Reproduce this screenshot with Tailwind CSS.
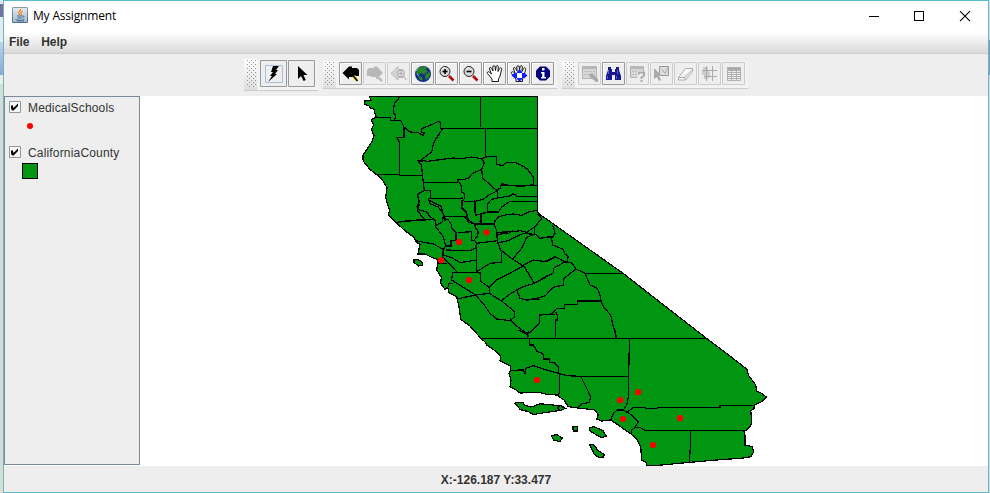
<!DOCTYPE html>
<html lang="en">
<head>
<meta charset="utf-8">
<title>My Assignment</title>
<script src="https://cdn.jsdelivr.net/npm/@tailwindcss/browser@4"></script>
</head>
<body class="w-[990px] h-[493px] overflow-hidden flex font-['Liberation_Sans',sans-serif] text-[12px] text-[#333]">
<!-- strip of the desktop behind the window -->
<div class="w-[3px] flex flex-col shrink-0 bg-[#ddd9d3]">
  <div class="h-[4px] bg-[#e3e3ea]"></div><div class="h-[13px] bg-[#7d6c9e]"></div><div class="h-[25px] bg-[#e9e9f0]"></div><div class="h-[33px] bg-linear-to-b from-[#c6d0e8] to-[#8fa6d3]"></div><div class="h-[9px] bg-[#f0ece0]"></div>
</div>
<div class="w-[986px] h-[493px] shrink-0 flex flex-col border border-[#5abccb] bg-[#eee]">
  <header class="h-[31px] shrink-0 bg-white flex items-center pl-2 text-black">
    <svg class="w-4 h-4 shrink-0 mb-[3px]" viewBox="0 0 16 16"><defs><linearGradient id="jb" x2="0" y2="1"><stop stop-color="#8799aa"/><stop offset="1" stop-color="#47688a"/></linearGradient><linearGradient id="jf" x2="0" y2="1"><stop stop-color="#e4e8eb"/><stop offset="1" stop-color="#a9bdcf"/></linearGradient></defs><rect width="16" height="16" rx="1.5" fill="url(#jb)"/><rect x="1" y="1" width="14" height="14" fill="url(#jf)"/><path d="M8.600 2c.8 2-2.600 2.500-2 4.200.2.700.9 1 1.200 1.800M10.600 4.200c-2.600 1.200-2 2-1.300 2.800.3.500 0 .9-.4 1.200" fill="none" stroke="#ec851c" stroke-width="1.200"/><path d="M5 9h5.500M5.500 11h4.500M10.500 9.200c2-.7 2.200 1 .3 1.700M3.600 12.500c1 1.200 7 1.200 8.700 0M5 13.800h7" fill="none" stroke="#426b96"/></svg>
    <span class="ml-[5px] mb-[2px] font-['Open_Sans'] text-[12px] leading-4 tracking-[-0.18px] w-[110px] whitespace-nowrap">My Assignment</span>
    <svg class="ml-auto mr-[16px] mb-[2px] w-[106px] h-[12px]" viewBox="0 0 106 12" fill="none" stroke="#000"><path d="M3 6.500h10M48.500 1.500h9v9h-9z" shape-rendering="crispEdges"/><path d="M94 1.200l10 10M104 1.200l-10 10" stroke-width="1.100"/></svg>
  </header>
  <nav class="h-[22px] shrink-0 border-b border-[#ccc] bg-linear-to-b from-white to-[#dadada] flex pl-[5px] gap-[12px] font-bold leading-[20px] tracking-[-0.1px]"><span>File</span><span>Help</span></nav>
  <div class="h-[42px] shrink-0 flex pl-[240px] pt-[4px]">
    <svg class="w-[504px] h-[34px]" viewBox="244 58 504 34">
      <defs>
        <linearGradient id="bar" x2="0" y2="1"><stop stop-color="#fff"/><stop offset="1" stop-color="#ddd"/></linearGradient>
        <pattern id="dots" x="247" y="60" width="4" height="4" patternUnits="userSpaceOnUse"><path d="M0 0h1v1h-1zM2 2h1v1h-1z" fill="#8d969f"/></pattern>
        <g id="on"><path d="M.5.500h22v22h-22z" fill="#eee" stroke="#999"/><path d="M1.500 21.500v-20h20" fill="none" stroke="#fff"/></g>
        <path id="off" d="M.5.500h22v22h-22z" fill="#eee" stroke="#ccc"/>
        <g id="lens"><circle cx="10" cy="9.500" r="5" fill="#d8d8d8" stroke="#222"/><path d="M7 7.500q1-2 3-2" stroke="#fff" fill="none"/><path d="M14 14l4.500 4.500" stroke="#b00d0d" stroke-width="2.600"/><path d="M7.500 9.500h5" stroke="#000" stroke-width="1.600"/></g>
        <path id="hand" d="M8 19.500V17L6 14.500 3.500 11.500c-.8-1.500.8-2.300 2-1.300L7.500 12 5.500 7c-.3-1.800 1.500-2 2-.8L9 9 8.800 5c0-1.800 2.200-1.800 2.400 0L11.500 8.500l.7-4c.4-1.400 2.200-1 2.100.5L14 9.500l1.600-3c.8-1.300 2.500-.5 2 1L16 14l-1.500 3v2.500z"/>
        <g id="grid"><path d="M0 0h12v3H0z" fill="#b9b9b9"/><path d="M.5.500h11v11h-11zM0 3.500h12M0 6.500h12M0 9.500h12M4.500 3v9M8.500 3v9" fill="none" stroke="#aaa"/></g>
      </defs>
      <path d="M244 59h74v31h-74zM323 61h234v27H323zM562 61h186v27H562z" fill="#f3f3f3"/>
      <path d="M244 59h13v31h-13zM323 61h13v27h-13zM562 61h13v27h-13z" fill="url(#bar)"/>
      <path d="M246 60h11v28h-11zM325 62h10v24h-10zM564 62h10v24h-10z" fill="url(#dots)"/>
      <path d="M244 90.500h74M323 88.500h234M562 88.500h186" stroke="#ccc"/>
      <g fill="#eee" stroke="#999"><path d="M260.500 60.500h26v26h-26zM288.500 60.500h26v26h-26z"/><path d="M265.500 65.500h17v17h-17z" stroke="#a9bfdc"/></g>
      <path d="M273 66h6l-3 4h2l-3 4h2l-9 8 4-6h-2l3-4h-2z"/>
      <path d="M298 66v13l3-3 2.600 5 2.200-1-2.400-5h4z"/>
      <g transform="translate(339 62)"><use href="#on"/><path d="M3.500 11L10 4.500h3V6h5l2 2v6H14v1h-4v2.500z"/><path d="M14.500 14l3.500 4.500" stroke="#e8df35" stroke-width="3.500"/><path d="M13.500 13l5 6" stroke="#000" stroke-width="1.500"/></g>
      <g transform="translate(363 62)"><use href="#off"/><path d="M20 11L14 4.500h-3V6H6L4 8v6h4v1h5v2.500z" fill="#b7b7b7"/><path d="M13.500 14l5.500 5" stroke="#bbb" stroke-width="2.500"/></g>
      <g transform="translate(387 62)"><use href="#off"/><path d="M4 11.500l7-7v3h5v8h-5V18z" fill="#d3d3d3" stroke="#bbb"/><circle cx="14" cy="11.500" r="3.500" fill="#ddd" stroke="#aaa"/><path d="M12 11.500h4M14 9.500v4M16.500 14l3 4" stroke="#aaa"/></g>
      <g transform="translate(411 62)"><use href="#on"/><circle cx="12" cy="12" r="8" fill="#122d86"/><path d="M6 7l4-2.800 6 .8-1 3 2 1.500-4 3-3-1.500-3 2-2-1zM14 13l4-3 1.500 2-2 4-3 2zM7 14l4 1 1 3.500-3-.5z" fill="#28852d"/><path d="M5 9l2-3M8 14l-2-2" stroke="#89b3dc"/></g>
      <g transform="translate(435 62)"><use href="#on"/><use href="#lens"/><path d="M10 7v5" stroke="#000" stroke-width="1.600"/></g>
      <g transform="translate(459 62)"><use href="#on"/><use href="#lens"/></g>
      <g transform="translate(483 62)"><use href="#on"/><use href="#hand" x="1" fill="#fff" stroke="#000" stroke-width=".9"/></g>
      <g transform="translate(507 62)"><use href="#on"/><use href="#hand" x="1" fill="#fff" stroke="#000" stroke-width=".9"/><path d="M12.500 7l3 3.500h-6zM12.500 20l-3-3.500h6zM4.500 13.500l3.500-3v6zM20.500 13.500l-3.500-3v6zM8 11h2v5H8zM15 11h2v5h-2zM10 9.500h5v1.500h-5zM10 16h5v1.500h-5z" fill="#1020ff"/></g>
      <g transform="translate(531 62)"><use href="#on"/><path d="M9 4.500h6l4 4v6l-4 4H9l-4-4v-6z" fill="#00007b"/><path d="M11 6h2.500v2.500H11zM10 10h3.500v5H15v1.500h-5V15h1.200v-3.500H10z" fill="#fff"/></g>
      <g transform="translate(578 62)"><use href="#off"/><path d="M4.500 5.500h14v11h-14z" fill="#d6d6d6" stroke="#b4b4b4"/><path d="M4 4h15v3H4z" fill="#b7b7b7"/><path d="M6 9.500h11M6 12.500h6" stroke="#bdbdbd" stroke-dasharray="2 1"/><path d="M11 12l3-1 6 6v3h-2l-6-5z" fill="#a9a9a9"/></g>
      <g transform="translate(602 62)"><use href="#on"/><path d="M6 5h3v2h1v3h3V7h1V5h3v3l2 6v4h-6v-5h-3v5H4v-4l2-6z" fill="#17178f"/><path d="M6.500 8v4M15.500 8v4M5.500 14v3M14.500 14v3" stroke="#5f5fc4"/></g>
      <g transform="translate(626 62)"><use href="#off"/><path d="M4.500 5.500h13v10h-13z" fill="#d6d6d6" stroke="#b4b4b4"/><path d="M4 4h14v3H4z" fill="#b7b7b7"/><path d="M6 9.500h6M6 12.500h6" stroke="#bdbdbd" stroke-dasharray="2 1"/><path d="M11.500 9h9v11h-6v-4h-3z" fill="#eee"/><path d="M13 12.500v-2h5v3l-2.500 2v1.500M15.500 18v2" stroke="#aaa" stroke-width="2" fill="none"/></g>
      <g transform="translate(650 62)"><use href="#off"/><path d="M9.500 4.500h9v9h-9z" fill="#ddd" stroke="#999"/><path d="M12 7.500l3 4 3-6" fill="none" stroke="#aaa"/><path d="M4 6v11l3-2 2 4 2-1-2-4h3z" fill="#aaa"/></g>
      <g transform="translate(674 62)"><use href="#off"/><path d="M4.500 15.500l7-9h7v3l-7 8.500h-7zM4.500 15.500h6.500l7.500-8M11 15.500V18" fill="#fafafa" stroke="#aaa"/></g>
      <g transform="translate(698 62)"><use href="#off"/><path d="M5 5h5v4l2 1v4l-2 3H6v-4H4V9h1z" fill="#ccc"/><path d="M8.500 4v15M14.500 4v15M4 8.500h15M6 14.500h13" stroke="#aaa"/></g>
      <g transform="translate(722 62)"><use href="#off"/><path d="M5 5h14v3H5z" fill="#aaa"/><path d="M5.500 5.500h13v13h-13zM5 8.500h14M5 10.500h14M5 12.500h14M5 14.500h14M5 16.500h14M9.500 8v11M14.500 8v11" fill="none" stroke="#b0b0b0"/></g>
    </svg>
  </div>
  <main class="h-[370px] shrink-0 flex bg-white">
    <aside class="w-[136px] h-[369px] shrink-0 border border-[#7a8a99] bg-[#eee] pl-[4px] pt-[4px]">
      <div class="flex h-[12px] items-center gap-[7px]">
        <svg class="w-3 h-3 shrink-0" viewBox="0 0 12 12"><path d="M.5.500h11v11H.5z" fill="#f6f6f6" stroke="#8f979f"/><path d="M1.500 11V1.500H11" fill="none" stroke="#fff"/><path d="M2 4.500h2v2h1L9 2.500V5L4.500 9.500H3.500L2 8z"/></svg>
        <span class="whitespace-nowrap tracking-[0.17px] relative top-px">MedicalSchools</span>
      </div>
      <svg class="w-[6px] h-[6px] ml-[18px] mt-[10px]" viewBox="0 0 6 6"><circle cx="3" cy="3" r="3" fill="red"/></svg>
      <div class="flex h-[12px] items-center gap-[7px] mt-[17px]">
        <svg class="w-3 h-3 shrink-0" viewBox="0 0 12 12"><path d="M.5.500h11v11H.5z" fill="#f6f6f6" stroke="#8f979f"/><path d="M1.500 11V1.500H11" fill="none" stroke="#fff"/><path d="M2 4.500h2v2h1L9 2.500V5L4.500 9.500H3.500L2 8z"/></svg>
        <span class="whitespace-nowrap tracking-[0.17px] relative top-px">CaliforniaCounty</span>
      </div>
      <div class="w-4 h-4 mt-[5px] ml-[13px] bg-[#009612] border border-black"></div>
    </aside>
    <svg class="w-[848px] h-[370px]" viewBox="140 96 848 370" fill="none" stroke="#000" stroke-width="1.250" shape-rendering="crispEdges">
      <!-- state outline -->
      <path fill="#009612" d="M369.300 96.500L371 100 365 101 364.500 104 369 106 370 108 373.700 108.700 375 113 376.300 117.300 372 119 371.700 121.300 373.700 124.300 371.500 129.700 374 135.300 371.700 142 367.300 148.700 363 155.300 363 160 364.300 162.700 370 169.300 375.700 174 381.700 178.700 387 187.700 385.700 197 387.300 203.700 389.500 210.300 388.300 215 395.700 222.300 405 230.700 414 237.300 415.700 241.700 420 244.300 418 254 425 254 431.700 257.300 437.300 259.300 438 262 436.700 270 441.300 277.300 440.700 283.300 445 289.300 447.700 287.300 449 292.700 456.700 296.700 459.300 308.300 460.700 319.300 470 326 480 337.300 485 342 486.700 345 493.300 349.300 500.700 356 500 360.700 506.700 364.300 510.700 366 510.700 370.300 509 373.300 511 380 510 386.700 516 390 520 393 538.300 392.300 546.700 394.300 556.700 395 564 400 568.300 406.700 578.300 408 595 410 598.300 415 596.700 419 601.700 421 610.700 420 616.700 424 631 434 636.700 439.300 640.700 446.700 641.700 460 646 462.300 646.700 465.300 658.300 465.300 690 462.300 716.700 460 743.300 458 751 456.700 753.700 451.700 752.300 446.700 745 445 745 435 744 431.700 747.300 429.300 751 425 751.700 420 750.700 410.700 754 409 754.300 405 761.700 401.700 766.500 397.300 761.700 393.300 756.700 391 755.700 385 748.300 375 747 369.300 730 356 705 337.200 623 273.300 541.700 215.700 537.500 212.500V96.500Z"/>
      <!-- coastal islands -->
      <g fill="#009612">
        <path d="M414 260L417.500 259.300 422.700 262.500V265.500L418.500 266 414 262.500Z"/>
        <path d="M514.500 403.500L516 402.500H523L524.500 405 530 407 533 406.500 540 403.800 553 405 562 406 565.300 408.500 560 410.500 547 412.300 533.500 414.500 528 411.500 520 409.500 518 406.500Z"/>
        <path d="M557.500 408.500L560 405.500 565.300 408.500 560 410.500Z"/>
        <path d="M572.500 427L577.500 426.500V431H573.500Z"/>
        <path d="M551.500 436L556 434.300 562.300 438 560 441.500 553.500 440Z"/>
        <path d="M589.500 427.500L594 426.700 603 430.500 606.500 436.500 601 437.500 595 434 590 431Z"/>
        <path d="M589.500 444.500L594 445 598 450.500 604.500 454.500 603.500 457 599 457.500 594 454Z"/>
      </g>
      <!-- northern counties -->
      <g transform="translate(355 92) scale(.33333)" stroke-width="3.750">
        <path d="M135 13L127 25 118 33 115 60 122 72 118 85M64 76H106L107 85H137L147 105V135L127 138 133 150V248M147 105L165 120 190 122 205 130 208 122 200 122V110L230 98 250 88 257 93V108L262 110 255 122 243 140 235 155 230 180 200 203 188 211M62 247H133V250H205M376.500 13V106M262 109.500H547M391.500 109V193"/>
        <path d="M188 211L205 206 218 208 240 205 295 198 320 200 350 195 380 200 391 195 424 193V218L445 220 455 211H480L500 220 518 232 535 255V278L500 283 460 280 440 275 435 290 420 293M188 205L200 220 202 250 205 271 208 295 188 307 192 340 187 355 200 372 212 385M205 271H308V262L325 263 340 258 352 245 380 232 388 212 380 200M380 232L383 258 405 278 427 297M308 262L320 285V300L328 305V320L322 328 320 350 335 365 340 385"/>
        <path d="M208 295H226V320M220 320H290L325 318M220 320L225 335 250 345 268 370 270 388M268 374H333M328 328H360L385 322 400 310 420 300 430 292M440 281H547M427 297V318M398 358V335L410 322 427 318 465 312 475 305 487 313H547M360 327L362 370 398 360H430L440 345 465 328H547M378 375L375 390M420 388L430 375 455 368 475 366 500 370 520 360 547 355M150 386L215 383"/>
      </g>
      <!-- bay area and central valley -->
      <g transform="translate(380 200) scale(.33333)" stroke-width="3.750">
        <path d="M47 67L100 62 165 58M120 0L111 20 118 30 140 35 150 50 165 60 168 78M145 0L183 18 190 45 188 65 165 78 175 90 190 110 197 138M190 49H250L283 72M190 55L205 60 215 75V85L228 98V122H213V138H195M245 0V20L258 35 262 65 285 72H342M283 0V35L290 45 303 42V72M285 72V80L295 95 292 108 283 120 275 122V95L235 98"/>
        <path d="M283 120L290 130 285 145 272 152 197 150M290 130L352 122M342 72L350 92 352 122 362 150 390 172 430 198M342 72L345 60M352 97L400 95 420 92 440 97 465 80 485 55 473 42M352 125L352 97M352 103L385 100 400 92M352 129L385 122 430 100 463 103V82M463 103L440 112 425 145 398 177M463 100L480 115 517 110"/>
        <path d="M107 122L160 132 190 148 188 170 183 180M197 138L190 148M190 165L215 173 240 188 290 180V130M188 170L230 215M218 217H300M290 130V215L330 190 364 187V155M172 190H200M218 217L215 240 255 265 287 285M300 217L303 245 328 262V280L287 285M205 262V250L218 250M230 297L287 285"/>
        <path d="M328 262L350 240 385 222 430 198M328 280L365 303 404 335V350L390 362 350 357 330 340 315 318 287 285M390 355L400 370 443 403V415M365 303L385 285 410 270 430 260 463 250M430 195L445 220 463 250M430 195L460 180 500 185 525 172M463 250L500 230 520 220M410 270L420 295 440 300 480 298M443 403L478 370V345L525 343"/>
      </g>
      <!-- sierra counties -->
      <g transform="translate(540 200) scale(.33333)" stroke-width="3.750">
        <path d="M38 75L45 100 35 115 38 135 70 148 75 162 85 170 80 188M0 115L28 110 35 115M0 185L20 183 45 170 62 178 80 188H95L108 207 135 220H245M40 220L20 228 0 240M40 220V205L75 185M0 293L15 288 40 262 70 255 72 235 108 207M135 220L150 255 172 265 180 285 183 303 190 320 212 345 220 380 230 413"/>
        <path d="M183 303H113V313H73V325H50L40 337 30 343H0M46 335L52 345V360H46V413M0 240L-20 250M0 293L-28 298"/>
      </g>
      <!-- southern counties -->
      <path d="M481 338.500H706"/>
      <g transform="translate(480 330) scale(.33333)" stroke-width="3.750">
        <path d="M148 25V45H160L172 65 188 70 192 87H208L210 97H222L235 110V130M92 121L130 120 135 130 137 115 160 107 200 120 235 130 260 137 302 139H445M238 130V190L230 195M302 139L325 185 332 200 328 217 305 222 295 230M448 25V40L446 139V195L440 225 430 240M392 270L400 250 412 240H430L455 255 475 275 465 292 455 300 453 312M115 0L135 10 148 5 140 12 148 22M440 248L460 232H495L500 236H532L534 232H720V226H823M465 292H480L495 301H800M631 301V350L628 397M227 0V25M407 0V25"/>
      </g>
      <g fill="red" stroke="none" shape-rendering="auto"><circle cx="486.500" cy="232.300" r="3.100"/><circle cx="459" cy="242" r="3.100"/><circle cx="441" cy="260.300" r="3.100"/><circle cx="469" cy="280.200" r="3.100"/><circle cx="537" cy="380" r="3.100"/><circle cx="620.200" cy="400.200" r="3.100"/><circle cx="638.200" cy="392.200" r="3.100"/><circle cx="623" cy="419" r="3.100"/><circle cx="680" cy="418.200" r="3.100"/><circle cx="653" cy="445" r="3.100"/></g>
    </svg>
  </main>
  <footer class="grow flex justify-center items-center font-bold"><span class="relative top-px">X:-126.187 Y:33.477</span></footer>
</div>
<div class="w-px shrink-0 flex flex-col bg-[#dcdcdc]"><div class="h-[40px]"></div><div class="h-[35px] bg-[#7c9cc8]"></div></div>
</body>
</html>
